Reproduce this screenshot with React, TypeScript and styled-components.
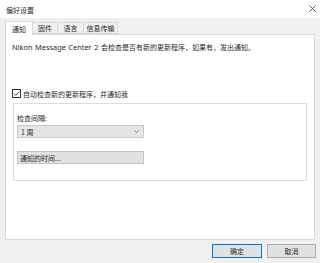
import React, { useState } from 'react';
import styled, { createGlobalStyle } from 'styled-components';

const GlobalStyle = createGlobalStyle`
  html, body {
    margin: 0;
    padding: 0;
    background: #f0f0f0;
  }
  body {
    font-family: "Noto Sans CJK SC", "Noto Sans", sans-serif;
    font-size: 7px;
    color: #2b2b2b;
  }
`;

const Window = styled.div`
  width: 320px;
  height: 263px;
  display: flex;
  flex-direction: column;
  background: #f0f0f0;
  overflow: hidden;
`;

const TitleBar = styled.div`
  height: 18px;
  background: #fff;
  display: flex;
  align-items: center;
  justify-content: space-between;
  padding: 2px 4px 0 6px;
  box-sizing: border-box;
  line-height: 10px;
`;

const CloseIcon = styled.svg`
  width: 7px;
  height: 7px;
  margin-top: -4px;
`;

const Body = styled.div`
  flex: 1;
  display: flex;
  flex-direction: column;
  padding: 3px 5px 0 5px;
`;

const TabRow = styled.div`
  display: flex;
  align-items: flex-end;
  height: 13px;
  position: relative;
  z-index: 1;
`;

const Tab = styled.div<{ $active?: boolean; $width: number }>`
  width: ${p => p.$width}px;
  height: ${p => (p.$active ? 14 : 12)}px;
  margin-bottom: ${p => (p.$active ? -1 : 0)}px;
  box-sizing: border-box;
  display: flex;
  align-items: center;
  justify-content: center;
  line-height: 10px;
  background: ${p => (p.$active ? '#fff' : '#f0f0f0')};
  border: 1px solid #d9d9d9;
  border-bottom: ${p => (p.$active ? 'none' : '1px solid #d9d9d9')};
  margin-left: ${p => (p.$active ? 0 : -1)}px;
  &:first-child {
    margin-left: 0;
  }
`;

const Panel = styled.div`
  height: 206px;
  box-sizing: border-box;
  background: #fff;
  border: 1px solid #d9d9d9;
  padding: 7px 6px 0 6px;
  display: flex;
  flex-direction: column;
`;

const Description = styled.div`
  line-height: 10px;
  white-space: nowrap;
`;

const Latin = styled.span`
  font-family: "Noto Sans", sans-serif;
  font-size: 7.4px;
  word-spacing: 0.6px;
`;

const CheckRow = styled.label`
  display: flex;
  align-items: center;
  gap: 2px;
  margin-top: 37px;
  height: 9px;
  line-height: 10px;
`;

const CheckBox = styled.svg`
  width: 9px;
  height: 9px;
  flex-shrink: 0;
`;

const GroupBox = styled.div`
  margin: 5px 1px 0 1px;
  border: 1px solid #dcdcdc;
  padding: 9px 3px 16px 3px;
  display: flex;
  flex-direction: column;
`;

const FieldLabel = styled.div`
  line-height: 10px;
`;

const Select = styled.div`
  margin-top: 2px;
  width: 127px;
  height: 13px;
  box-sizing: border-box;
  background: #e5e5e5;
  border: 1px solid #c8c8c8;
  display: flex;
  align-items: center;
  justify-content: space-between;
  padding: 0 4px 0 3px;
  line-height: 10px;
`;

const Chevron = styled.svg`
  width: 5px;
  height: 3px;
`;

const WideButton = styled.button`
  margin-top: 13px;
  width: 127px;
  height: 13px;
  box-sizing: border-box;
  background: #e1e1e1;
  border: 1px solid #c4c4c4;
  font: inherit;
  line-height: 10px;
  text-align: left;
  padding: 0 2px;
  color: inherit;
`;

const Footer = styled.div`
  display: flex;
  justify-content: flex-end;
  gap: 5px;
  padding: 4px 0 0 0;
  margin-right: -1px;
`;

const DialogButton = styled.button<{ $primary?: boolean }>`
  width: ${p => (p.$primary ? 50 : 49)}px;
  height: 14px;
  box-sizing: border-box;
  background: #e1e1e1;
  border: 1px solid ${p => (p.$primary ? '#0078d7' : '#adadad')};
  font: inherit;
  line-height: 10px;
  padding: 0;
  color: inherit;
`;

const tabs = [
  { label: '通知', width: 28 },
  { label: '固件', width: 26 },
  { label: '语言', width: 27 },
  { label: '信息传输', width: 35 },
];

const App: React.FC = () => {
  const [activeTab, setActiveTab] = useState(0);
  const [autoCheck, setAutoCheck] = useState(true);

  return (
    <Window>
      <GlobalStyle />
      <TitleBar>
        <span>偏好设置</span>
        <CloseIcon viewBox="0 0 7 7">
          <path d="M0.5 0.5 L6.5 6.5 M6.5 0.5 L0.5 6.5" stroke="#333" strokeWidth="0.8" />
        </CloseIcon>
      </TitleBar>
      <Body>
        <TabRow>
          {tabs.map((t, i) => (
            <Tab key={t.label} $width={t.width} $active={i === activeTab} onClick={() => setActiveTab(i)}>
              {t.label}
            </Tab>
          ))}
        </TabRow>
        <Panel>
          <Description>
            <Latin>Nikon Message Center 2 </Latin>会检查是否有新的更新程序，如果有，发出通知。
          </Description>
          <CheckRow onClick={() => setAutoCheck(!autoCheck)}>
            <CheckBox viewBox="0 0 9 9">
              <rect x="0.5" y="0.5" width="8" height="8" fill="#fff" stroke="#333" />
              {autoCheck && <path d="M2 4.6 L3.8 6.4 L7.2 2.6" fill="none" stroke="#333" strokeWidth="0.9" />}
            </CheckBox>
            <span>自动检查新的更新程序，并通知我</span>
          </CheckRow>
          <GroupBox>
            <FieldLabel>检查间隔:</FieldLabel>
            <Select>
              <span>1 周</span>
              <Chevron viewBox="0 0 5 3">
                <path d="M0.3 0.3 L2.5 2.6 L4.7 0.3" fill="none" stroke="#555" strokeWidth="0.7" />
              </Chevron>
            </Select>
            <WideButton>通知的时间...</WideButton>
          </GroupBox>
        </Panel>
        <Footer>
          <DialogButton $primary>确定</DialogButton>
          <DialogButton>取消</DialogButton>
        </Footer>
      </Body>
    </Window>
  );
};

export default App;
